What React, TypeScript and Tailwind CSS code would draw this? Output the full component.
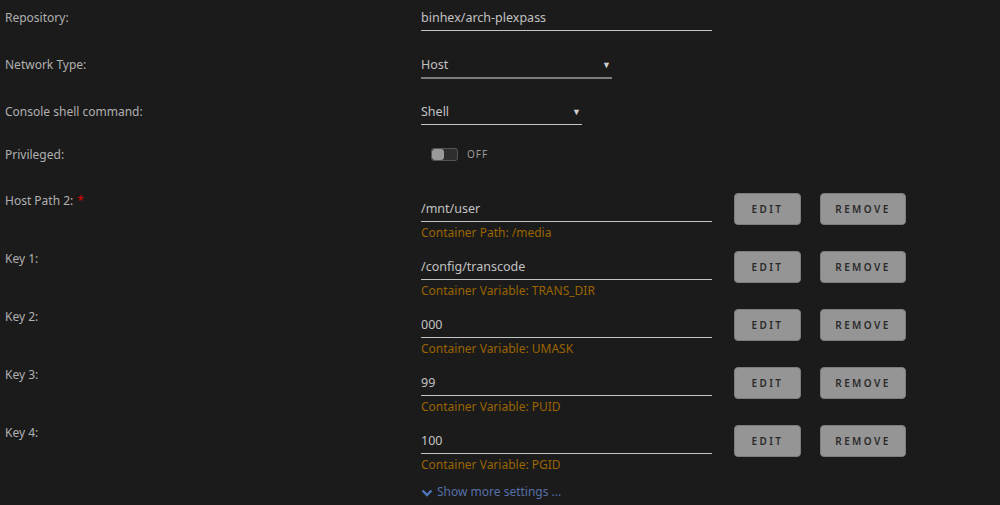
import React from "react";

const font = { fontFamily: '"Noto Sans", "Open Sans", sans-serif' };

type PathRow = { label: string; value: string; hint: string; required?: boolean };

const rows: PathRow[] = [
  { label: "Host Path 2:", value: "/mnt/user", hint: "Container Path: /media", required: true },
  { label: "Key 1:", value: "/config/transcode", hint: "Container Variable: TRANS_DIR" },
  { label: "Key 2:", value: "000", hint: "Container Variable: UMASK" },
  { label: "Key 3:", value: "99", hint: "Container Variable: PUID" },
  { label: "Key 4:", value: "100", hint: "Container Variable: PGID" },
];

function Label({ children, top }: { children: React.ReactNode; top: string }) {
  return (
    <div className={`w-[421px] shrink-0 pl-[5px] text-[12px] leading-[18px] text-[#b0b0b0] ${top}`}>
      {children}
    </div>
  );
}

function Btn({ children, width }: { children: React.ReactNode; width: string }) {
  return (
    <button
      className={`h-[32px] ${width} rounded-[4px] bg-[#959595] border border-[#7d7d7d] text-[10px] font-semibold tracking-[2.4px] text-[#2a2a2a]`}
    >
      {children}
    </button>
  );
}

export default function App() {
  return (
    <div className="w-[1000px] h-[505px] bg-[#1b1b1b] overflow-hidden" style={font}>
      <div className="flex h-[47px]">
        <Label top="pt-[9px]">Repository:</Label>
        <div className="w-[291px] pt-[9px] pb-[3px] border-b border-[#c4c4c4] self-start text-[12.5px] leading-[18px] text-[#c2c2c2]">
          binhex/arch-plexpass
        </div>
      </div>
      <div className="flex h-[47px]">
        <Label top="pt-[9px]">Network Type:</Label>
        <div className="self-start flex items-center justify-between w-[191px] pt-[9px] pb-[3px] border-b-2 border-[#7c7c7c]">
          <span className="text-[12.5px] leading-[18px] text-[#c2c2c2]">Host</span>
          <span className="text-[9px] text-[#cfcfcf] pr-[1px]">▼</span>
        </div>
      </div>
      <div className="flex h-[47px]">
        <Label top="pt-[9px]">Console shell command:</Label>
        <div className="self-start flex items-center justify-between w-[161px] pt-[9px] pb-[3px] border-b border-[#c4c4c4]">
          <span className="text-[12.5px] leading-[18px] text-[#c2c2c2]">Shell</span>
          <span className="text-[9px] text-[#cfcfcf] pr-[1px]">▼</span>
        </div>
      </div>
      <div className="flex h-[50px]">
        <Label top="pt-[5px]">Privileged:</Label>
        <div className="flex items-center gap-[9px] pl-[10px] h-[26px]">
          <div className="flex w-[27px] h-[13px] rounded-[3px] border border-[#555] bg-[#2e2e2e] overflow-hidden">
            <div className="w-[12px] h-full bg-[#9a9a9a] rounded-[3px]" />
          </div>
          <span className="text-[10px] tracking-[1px] text-[#9a9a9a]">OFF</span>
        </div>
      </div>
      {rows.map((r) => (
        <div key={r.label} className="flex h-[58px]">
          <Label top="pt-[1px]">
            {r.label}
            {r.required && <span className="text-[#d00] ml-[4px]">*</span>}
          </Label>
          <div className="w-[291px]">
            <div className="pt-[9px] pb-[3px] border-b border-[#c4c4c4] text-[12.5px] leading-[18px] text-[#c2c2c2]">
              {r.value}
            </div>
            <div className="mt-[2px] text-[12px] leading-[18px] text-[#9a6400]">{r.hint}</div>
          </div>
          <div className="flex gap-[19px] pl-[22px] pt-[2px] items-start">
            <Btn width="w-[67px]">EDIT</Btn>
            <Btn width="w-[86px]">REMOVE</Btn>
          </div>
        </div>
      ))}
      <div className="flex">
        <div className="w-[421px] shrink-0" />
        <div className="flex items-center gap-[4px] pt-[2px] text-[12px] leading-[18px] text-[#5670a8]">
          <svg width="12" height="12" viewBox="0 0 12 12" className="mt-[1px]">
            <path d="M1.5 3.5 L6 8 L10.5 3.5" fill="none" stroke="#4e78b8" strokeWidth="2.4" />
          </svg>
          <span>Show more settings ...</span>
        </div>
      </div>
    </div>
  );
}
